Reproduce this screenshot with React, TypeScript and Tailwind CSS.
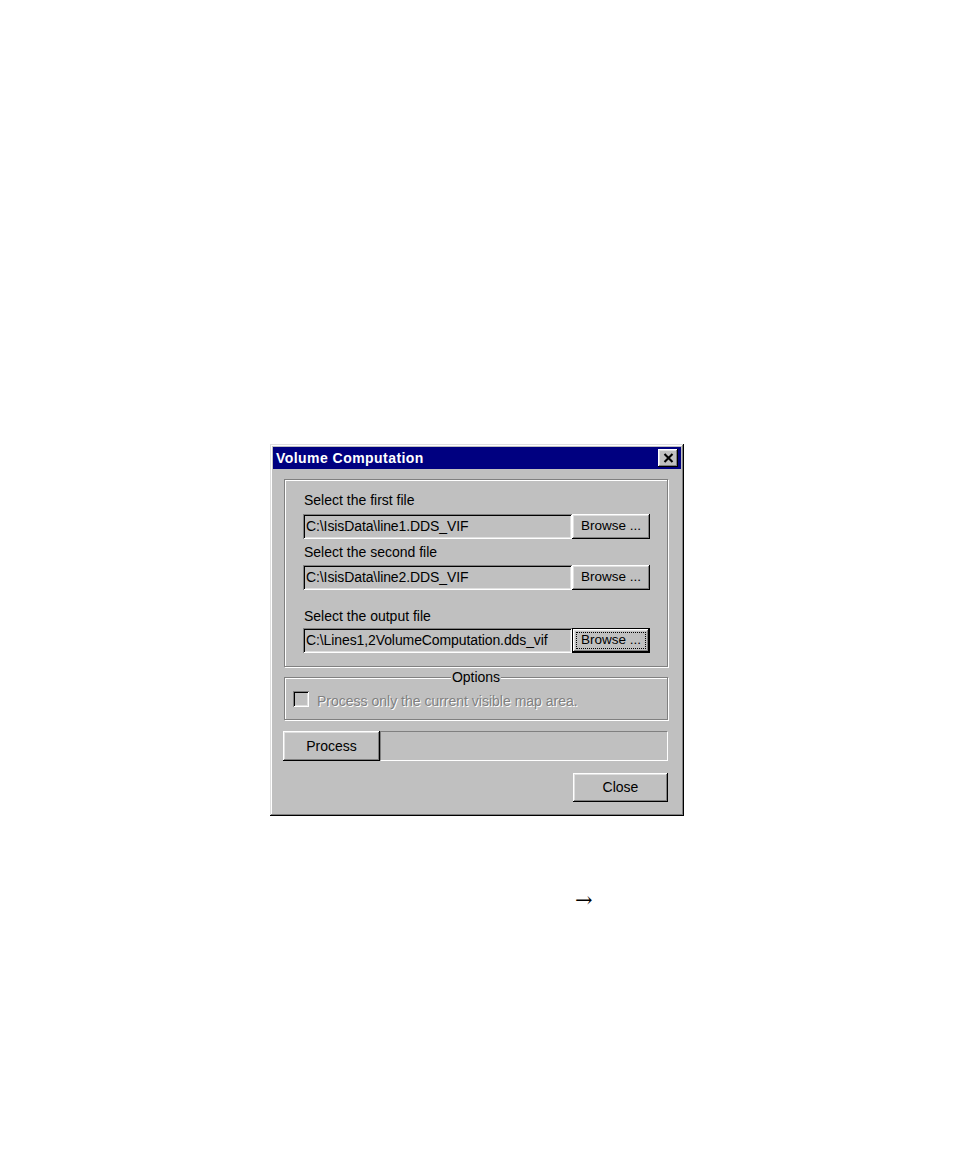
import React from "react";

const raised =
  "shadow-[inset_-1px_-1px_#000,inset_1px_1px_#fff,inset_-2px_-2px_#808080,inset_2px_2px_#dfdfdf]";
const windowBevel =
  "shadow-[inset_-1px_-1px_#000,inset_1px_1px_#dfdfdf,inset_-2px_-2px_#808080,inset_2px_2px_#fff]";
const sunken =
  "shadow-[inset_1px_1px_#808080,inset_-1px_-1px_#fff,inset_2px_2px_#000,inset_-2px_-2px_#dfdfdf]";
const defaultBtn =
  "shadow-[inset_0_0_0_1px_#000,inset_-2px_-2px_#000,inset_2px_2px_#fff,inset_-3px_-3px_#808080,inset_3px_3px_#dfdfdf]";
const etched =
  "border border-[#808080] shadow-[inset_1px_1px_#fff,1px_1px_#fff]";

function FileRow({ value, focused }: { value: string; focused?: boolean }) {
  return (
    <div className="flex h-[25px] pl-[18px]">
      <div
        className={`w-[269px] h-full bg-[#c0c0c0] ${sunken} flex items-center pl-[3px] text-[14px] tracking-[-0.1px] text-black whitespace-nowrap overflow-hidden`}
      >
        {value}
      </div>
      {focused ? (
        <div
          className={`w-[78px] h-full bg-[#c0c0c0] ${defaultBtn} flex text-[13.5px] text-black`}
        >
          <span className="flex-1 m-[4px] border border-dotted border-black flex items-center justify-center">
            Browse ...
          </span>
        </div>
      ) : (
        <div
          className={`w-[78px] h-full bg-[#c0c0c0] ${raised} flex items-center justify-center text-[13.5px] text-black`}
        >
          Browse ...
        </div>
      )}
    </div>
  );
}

function Label({ children, className = "" }: { children: React.ReactNode; className?: string }) {
  return (
    <div className={`pl-[19px] h-[16px] leading-[16px] text-[14px] text-black ${className}`}>
      {children}
    </div>
  );
}

export default function App() {
  return (
    <div className="min-h-[1159px] w-[954px] bg-white font-['Liberation_Sans',Arial,sans-serif]">
      <div className="pt-[444px] pl-[270px]">
        <div className={`w-[414px] h-[372px] bg-[#c0c0c0] ${windowBevel} p-[3px] flex flex-col`}>
          {/* Title bar */}
          <div className="h-[22px] bg-[#000080] flex items-center justify-between pl-[3px] pr-[3px]">
            <span className="text-white font-bold text-[14px] tracking-[0.45px] leading-none">
              Volume Computation
            </span>
            <div className={`w-[20px] h-[18px] bg-[#c0c0c0] ${raised} flex items-center justify-center`}>
              <svg width="11" height="10" viewBox="0 0 11 10">
                <path d="M1.5 1 L9.5 9 M9.5 1 L1.5 9" stroke="#000" strokeWidth="2.1" fill="none" />
              </svg>
            </div>
          </div>

          {/* Body */}
          <div className="pl-[11px] flex flex-col">
            {/* File group */}
            <div className={`mt-[10px] w-[384px] h-[188px] ${etched} pt-[12px] flex flex-col`}>
              <Label>Select the first file</Label>
              <div className="mt-[6px]">
                <FileRow value="C:\IsisData\line1.DDS_VIF" />
              </div>
              <Label className="mt-[5px]">Select the second file</Label>
              <div className="mt-[5px]">
                <FileRow value="C:\IsisData\line2.DDS_VIF" />
              </div>
              <Label className="mt-[18px]">Select the output file</Label>
              <div className="mt-[4px]">
                <FileRow value="C:\Lines1,2VolumeComputation.dds_vif" focused />
              </div>
            </div>

            {/* Options group */}
            <div className={`relative mt-[10px] w-[384px] h-[43px] ${etched} flex items-center pl-[8px] pt-[1px]`}>
              <span className="absolute left-1/2 -translate-x-1/2 top-[-9px] bg-[#c0c0c0] px-[1px] text-[14px] leading-[16px] text-black">
                Options
              </span>
              <div className={`w-[16px] h-[16px] bg-[#c0c0c0] ${sunken}`} />
              <span className="ml-[8px] mt-[3px] text-[14px] leading-[16px] text-[#808080] [text-shadow:1px_1px_0_#fff]">
                Process only the current visible map area.
              </span>
            </div>

            {/* Process row */}
            <div className="mt-[11px] w-[385px] h-[30px] flex -ml-[1px]">
              <div
                className={`w-[97px] h-full bg-[#c0c0c0] ${raised} flex items-center justify-center text-[14px] text-black`}
              >
                Process
              </div>
              <div className="flex-1 h-full border-t border-l border-[#808080] border-b border-b-white border-r border-r-white" />
            </div>

            {/* Close row */}
            <div className="mt-[12px] w-[384px] flex justify-end">
              <div
                className={`w-[95px] h-[29px] bg-[#c0c0c0] ${raised} flex items-center justify-center text-[14px] text-black`}
              >
                Close
              </div>
            </div>
          </div>
        </div>
      </div>
      <div className="pl-[575px] mt-[72px] h-[24px] leading-[24px] text-[21px] text-black font-['DejaVu_Serif',serif]">
        →
      </div>
    </div>
  );
}
